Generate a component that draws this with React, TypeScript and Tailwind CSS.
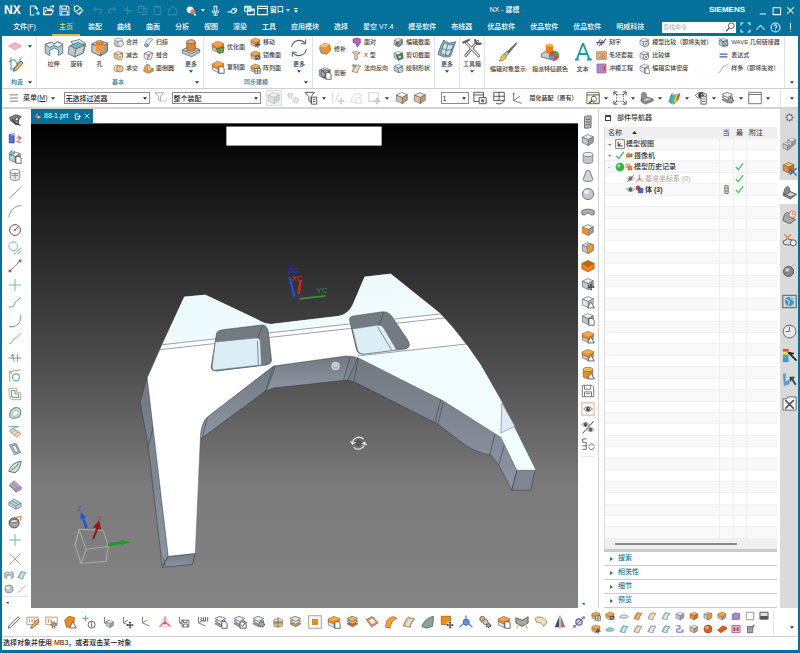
import React from 'react';
import { clsx } from 'clsx';

type Tone = 'grey' | 'orange' | 'blue' | 'pale' | 'tan' | 'teal' | 'purple';

const tones: Record<Tone, [string, string, string]> = {
  grey: ['#eceeef', '#c3c7cb', '#9aa0a6'],
  orange: ['#ffb655', '#f28c1e', '#cf6c0c'],
  blue: ['#d6edf5', '#a3cddd', '#77a8be'],
  pale: ['#f6f6f6', '#e6e6e6', '#d3d3d3'],
  tan: ['#f6dfc2', '#e0bd95', '#c09a70'],
  teal: ['#c9eeee', '#84cdd0', '#4fa3a8'],
  purple: ['#e2d2ee', '#c3a9da', '#9a80bd'],
};

const INK = '#656b72';

const Cube = ({ t = 'grey', top }: { t?: Tone; top?: Tone }) => {
  const c = tones[t];
  return (
    <g stroke={INK} strokeWidth=".8" strokeLinejoin="round">
      <path d="M1.5 4.8 7.5 1.8 14 4.2 8.4 7.5Z" fill={tones[top ?? t][0]} />
      <path d="M1.5 4.8 8.4 7.5V14.4L1.5 11.2Z" fill={c[1]} />
      <path d="M8.4 7.5 14 4.2V10.6L8.4 14.4Z" fill={c[2]} />
    </g>
  );
};

const OrangeTopCube = ({ t = 'grey' }: { t?: Tone }) => (
  <>
    <Cube t={t} />
    <path d="M1.5 4.8 7.5 1.8 14 4.2V7L8.4 10.4 1.5 7.6Z" fill="#f28c1e" stroke={INK} strokeWidth=".7" strokeLinejoin="round" />
    <path d="M1.5 4.8 7.5 1.8 14 4.2 8.4 7.5Z" fill="#ffa640" />
  </>
);

const Cyl = ({ t = 'grey' }: { t?: Tone }) => (
  <g stroke={INK} strokeWidth=".8">
    <path d="M2.5 4V12C2.5 15 13.5 15 13.5 12V4Z" fill={tones[t][1]} />
    <ellipse cx="8" cy="4" rx="5.5" ry="2.4" fill={tones[t][0]} />
  </g>
);

const Sheet = ({ t = 'blue' }: { t?: Tone }) => (
  <g stroke={INK} strokeWidth=".8" strokeLinejoin="round">
    <path d="M1.5 12.5C3 8 4.5 5 7 2.5L14.5 4.5C11.5 7 10 10 9.5 14Z" fill={tones[t][1]} />
    <path d="M4.4 12.2C5.5 8.6 7 6 9 4.2L12 5C10 7 8.6 9.6 8 13Z" fill={tones[t][0]} stroke="none" />
  </g>
);

const Layers = ({ t = 'grey' }: { t?: Tone }) => (
  <g stroke={INK} strokeWidth=".9" strokeLinejoin="round">
    <path d="M1 10 7 7.5 13.5 10 7.5 13.5Z" fill={tones[t][2]} />
    <path d="M1 7 7 4.5 13.5 7 7.5 10.5Z" fill={tones[t][0]} />
    <path d="M1 4 7 1.5 13.5 4 7.5 7.5Z" fill={tones[t][0]} />
  </g>
);

const Page = () => (
  <path d="M9 7.5H12.8L15 9.8V15.2H9Z" fill="#fff" stroke="#444" strokeWidth=".9" />
);

const Gear = ({ x = 11.5, y = 11.5, r = 2.6 }: { x?: number; y?: number; r?: number }) => (
  <g fill="#fff" stroke="#444">
    <circle cx={x} cy={y} r={r + 0.9} strokeDasharray="1.4 1.2" strokeWidth="1.4" />
    <circle cx={x} cy={y} r={r} strokeWidth=".9" />
    <circle cx={x} cy={y} r={r / 3} strokeWidth=".7" />
  </g>
);

const Move = () => (
  <path d="M11.5 8V15M8 11.5H15M10.5 9 11.5 8 12.5 9M10.5 14 11.5 15 12.5 14M9 10.5 8 11.5 9 12.5M14 10.5 15 11.5 14 12.5" fill="none" stroke="#333" strokeWidth="1.1" />
);

const Axes = () => (
  <g fill="none" strokeWidth="1.1">
    <path d="M4 2V9" stroke="#5a9a6a" />
    <path d="M4 9 12 12.5" stroke="#777" />
    <path d="M4 9 9.5 5.5" stroke="#c96a56" />
  </g>
);

const Tri = () => <path d="M11 7.5 15.2 14.8H7.6Z" fill="#fff" stroke="#555" strokeWidth="1" />;

const Pencil = () => (
  <path d="M6 13 13 5 15 7 8.3 14.4 5.4 15.2Z" fill="#f4c84a" stroke="#4a4a4a" strokeWidth=".9" />
);

const Eye = () => (
  <g fill="none" stroke="#444" strokeWidth="1">
    <path d="M1.5 8C4.5 3.5 11.5 3.5 14.5 8C11.5 12.5 4.5 12.5 1.5 8Z" fill="#fff" />
    <circle cx="8" cy="8" r="2.8" fill="#444" />
    <circle cx="8.8" cy="7.2" r=".8" fill="#fff" stroke="none" />
  </g>
);

const line = (d: string, stroke = INK, strokeWidth = 1.1) => (
  <path d={d} fill="none" stroke={stroke} strokeWidth={strokeWidth} strokeLinecap="round" strokeLinejoin="round" />
);

const icons: Record<string, React.ReactNode> = {
  plane: <path d="M.5 8 8 4 15.5 8 8 12.5Z" fill="#f5b4c8" stroke="#df8fa8" strokeWidth=".8" />,
  sketch: <>{line('M3 1.5V13.5M3 13.5C6 13.5 8 11 13 2M1 6C6 2 8 4 9 8', '#5da7bd', 1.2)}<Pencil /></>,
  extrude: <g stroke={INK} strokeWidth=".7" strokeLinejoin="round">
    <path d="M1 5 6 3.4 8 5 10.6 3 15 5V12L11.5 14V9.5L8.2 8 4.6 9.8V14L1 12Z" fill={tones.blue[1]} />
    <path d="M1 5 6 3.4 8 5 10.6 3 15 5 11.5 7.4 8 6 4.6 7.6Z" fill="#e2f3f8" />
  </g>,
  revolve: <g stroke={INK} strokeWidth=".7" strokeLinejoin="round">
    <path d="M1.5 7 9 3 15 5 13 12 6 15 1 12.5Z" fill={tones.grey[1]} />
    <path d="M3 3 10 1.2 14.8 4.4 7.5 7.2Z" fill="#d5eef8" />
    <path d="M2.5 6 9 3.5 14 5.6 7 9Z" fill="#6bb4d2" />
    <path d="M7 9 14 5.6 13 12 6 15Z" fill="#c9ced2" />
  </g>,
  hole: <><Cube /><path d="M4.6 4.6H11V10C11 12 4.6 12 4.6 10Z" fill="#f39a35" /><ellipse cx="7.8" cy="4.4" rx="3.4" ry="1.6" fill="#e97d11" /></>,
  more: <g stroke={INK} strokeWidth=".7">
    <path d="M1 9.5 7.5 6.5 15 9.2V11.5L8.6 15 1 12Z" fill="#c4c9cd" />
    <path d="M1 9.5 8.6 12.5 15 9.2" fill="none" />
    <path d="M4.6 3V9C4.6 10.8 11.4 10.8 11.4 9V3Z" fill="#ee8014" />
    <ellipse cx="8" cy="3" rx="3.4" ry="1.6" fill="#ffb050" />
  </g>,
  cube: <Cube />,
  cubeOrange: <Cube t="orange" />,
  cubeTop: <OrangeTopCube />,
  cubePale: <Cube t="pale" />,
  cubeTan: <Cube t="tan" />,
  cubeHalf: <><Cube /><path d="M7 4C10 3 13 4 14 4.6V10.6L8.4 14.4C7 12 6 7 7 4Z" fill="#f39a35" stroke={INK} strokeWidth=".7" /></>,
  cubeFront: <><Cube /><path d="M1.5 4.8 8.4 7.5V14.4L1.5 11.2Z" fill="#f28c1e" /></>,
  shell: <g stroke="#9a5410" strokeWidth=".8" strokeLinejoin="round"><path d="M1 5 8 1.6 15 5V11L8 14.8 1 11Z" fill="#ee8418" /><path d="M1 5 8 8.5 15 5" fill="none" /><path d="M3.6 5 8 3 12.4 5 8 7.2Z" fill="#c76a0e" /></g>,
  unite: <><Cyl /><path d="M7 7 11 5.6 15 7V12L11 14.5 7 12Z" fill="#e3e6e8" stroke={INK} strokeWidth=".8" /></>,
  subtract: <><Cube t="tan" /><ellipse cx="10" cy="10" rx="4" ry="4.4" fill="#fff1df" stroke="#9a6b35" /><circle cx="10" cy="10" r="1.7" fill="#e28a34" /></>,
  intersect: <g fill="#f7e3c9" stroke="#9a6b35"><circle cx="6" cy="8" r="4.6" /><circle cx="10" cy="8.4" r="4.8" fill="#eab878" fillOpacity=".7" /></g>,
  sweep: <g stroke={INK} strokeWidth=".9"><path d="M3 14C1 10 5 3 11 1.5L14.5 4C10 6 8 10 8 13Z" fill="#d5ecf4" /><circle cx="5.5" cy="12.3" r="2.3" fill="#7bb6d0" /></g>,
  sew: <><path d="M2 5 8 2 14.5 4.5 12 13 6 14 1.5 11Z" fill="#eceeef" stroke={INK} />{line('M2 5 7.6 7.4 14 4.6M7.6 7.4 6.4 13.6', INK)}<circle cx="9" cy="9" r="1.4" fill="#d86a55" /></>,
  blend: <g stroke={INK} strokeWidth=".8"><path d="M1 12C1 7 3 4 6 2L10 4V9L15 8V12L8 15Z" fill="#f29a38" /><path d="M10 4C10 7 11 9 15 8L8 12C6 10 6 6 6 2Z" fill="#ffca85" /></g>,
  optimise: <><OrangeTopCube t="tan" /><path d="M6 10 15 8 14 14 9 15.5Z" fill="#6c9a4a" stroke="#3c5d26" strokeWidth=".8" /></>,
  copyFace: <><OrangeTopCube t="pale" /><Page /></>,
  moveFace: <><OrangeTopCube t="tan" /><Move /></>,
  mirrorFace: <><OrangeTopCube t="tan" /><path d="M8 8H15V14H8Z" fill="#4d4d4d" /><path d="M9 12 11 9.5 13.5 13" stroke="#fff" fill="none" /></>,
  patternFace: <><OrangeTopCube t="tan" /><path d="M7 8H15V15H7ZM11 8V15M7 11.5H15" fill="#fff" stroke="#444" strokeWidth="1" /></>,
  cycle: <>{line('M2.2 7A6 6 0 0 1 13 4.4M13.8 9A6 6 0 0 1 3 11.6', '#666', 0.9)}{line('M13.3 1.4V4.6H10M2.7 14.6V11.4H6', '#666', 0.9)}</>,
  patch: <><path d="M2 5 7 1.5 13 3 14.6 9 10 14 3.5 12.5Z" fill="#f0932c" stroke="#8d7350" /><path d="M2 5 8 6 13 3 7 1.5Z" fill="#ffc47a" /><path d="M1 7 4 6.5 5.5 10.5 3 12Z" fill="#959ba1" /></>,
  trimBody: <><Cube /><circle cx="8" cy="9" r="4.6" fill="#a4a9ad" stroke="#444" />{line('M4 4 13 14M13 6 6 13', '#333', 1)}<Page /></>,
  facePair: <path d="M3 3 8 1.5 13.5 3V9L9 14.5 7 9 3 8Z" fill="#b860c8" stroke="#6b3b8b" />,
  xform: <><path d="M2 3 8 2 13.5 4 9 7 9.5 13 5.5 14V7Z" fill="#f2d3bb" stroke="#8b7464" /><path d="M5 4 8 7 12 4" fill="none" stroke="#cb694f" /></>,
  flip: <><Sheet t="tan" />{line('M3 3 7 6M3 3V6M3 3H6', '#5c8350', 1.2)}</>,
  editSection: <><Cube /><path d="M3 11 13 3V9L7 14Z" fill="#8ba48c" stroke={INK} /><circle cx="6" cy="9" r="2" fill="#5d6268" /></>,
  cutSection: <><Cube /><path d="M5 8 13 5 15 12 8 15Z" fill="#3f9a4e" stroke="#28602f" /><circle cx="10" cy="10" r="1.6" fill="#c8f0c0" /></>,
  drawShape: <><Cube t="blue" /><circle cx="11" cy="10" r="3.6" fill="#e5e8ea" stroke={INK} /><path d="M10 8 13 12" stroke="#4c9b58" /></>,
  surface: <g stroke={INK} strokeWidth=".7" strokeLinejoin="round"><path d="M.8 13C2 8 4 4 5.5 1.5 8.5 5 11 4 15 3 13.4 6.5 12 11 10.8 14.6 7.5 16 4 15 .8 13Z" fill="#79b4c9" /><path d="M3 12C4 8 5 5.4 6.3 3.6 9 6 11 5.6 13.4 5 12.2 8 11 11 10 13.5 7.5 14.3 5 13.6 3 12Z" fill="#c9e9f2" /><path d="M4 8.4C7 10 9 10 12 9M8.4 5.2 6.6 14" fill="none" /></g>,
  tools: <>{line('M3.5 4 13.4 14.4M12.6 2.6 3 14', '#5b5b5b', 2.2)}{line('M3.5 4 13.4 14.4M12.6 2.6 3 14', '#fff', 0.9)}{line('M1 3.6 5.6 1.5M10.4 1.6C10.6 4.4 12.6 5.4 15 4.4', '#5b5b5b', 1.6)}</>,
  brush: <g stroke="#555" strokeWidth=".5"><path d="M15.2 1 8 9.8 6.5 8.4 14.6.6Z" fill="#8b6a4a" /><path d="M8.6 9 6.8 11 5 9.6 6.6 7.8Z" fill="#cfd3d6" /><path d="M6.8 11C6 14 3.5 15.6 1 15.2 2.5 13.5 2.4 10.8 5 9.6Z" fill="#f4c53a" /></g>,
  colour: <><path d="M1 9.5 7 6.5 14 9 8.6 14 1 12Z" fill="#c9cdd0" stroke={INK} strokeWidth=".7" /><path d="M4.6 2.4V8C4.6 9.6 10.4 9.6 10.4 8V2.4Z" fill="#ee8014" /><ellipse cx="7.5" cy="2.4" rx="2.9" ry="1.2" fill="#ffb050" /><circle cx="11.2" cy="11" r="3.8" fill="#49a7d8" stroke="#555" strokeWidth=".5" /><path d="M11.2 11V7.2A3.8 3.8 0 0 0 7.4 11Z" fill="#e2483a" /><path d="M11.2 11V7.2A3.8 3.8 0 0 1 15 11Z" fill="#41a94b" /><path d="M11.2 11H15A3.8 3.8 0 0 1 11.2 14.8Z" fill="#e2483a" /></>,
  letterA: <path d="M8 1 13.2 14M8 1 3 14M5 9.6H11.2M1.6 14H4.6M11.2 14H15" fill="none" stroke="#1b9aa6" strokeWidth="1.5" />,
  engrave: <>{line('M2 11 6 4M5 13 9 5M8 11 14 3', '#8a56a8', 1.8)}{line('M1 8H12', '#4b4453', 1.3)}</>,
  nest: <g stroke="#a05b32"><path d="M1 2.5H15V13.5H1Z" fill="#f3c295" /><path d="M4 5H7V11H4ZM9 5H12V8H9ZM9 9.5H12V12H9Z" fill="#fff3e4" /></g>,
  die: <g strokeWidth="1"><path d="M1.5 1.5H14.5V14.5H1.5Z" fill="#d9a1bd" stroke="#73598f" /><path d="M4 2V14M7 2V14M10 2V14" stroke="#754db0" /><path d="M11 4H14V12H11Z" fill="#d84d48" /></g>,
  compare: <><Cube t="pale" /><circle cx="10" cy="10" r="3.8" fill="#fff" stroke="#444" /><circle cx="10.2" cy="10.2" r="1.5" fill="#777" /></>,
  density: <><Cube t="pale" /><Page /></>,
  wave: <><Cube t="blue" /><circle cx="10.5" cy="9.5" r="4" fill="#b8bec3" stroke="#444" />{line('M2 2 14 13', '#444', 0.9)}</>,
  equals: line('M3 6H13M3 10H13', '#3d5f92', 1.8),
  spline: line('M1 14C6 13 5 5 9 4.4S12 3 15 1.5', '#6aa9b8', 1.2),
  menu: line('M2 3H14M2 8H14M2 13H14', '#555', 1.2),
  filter: <>{line('M1.5 2H11L7.6 6.5V12L5.2 10V6.5Z', '#aaa')}{line('M9 11C12 14 14 12 14.5 9', '#c4c4c4')}</>,
  filterOn: <><path d="M1 1.5H12L8 6.5V13L5.5 11V6.5Z" fill="#fff" stroke="#444" /><path d="M8.5 7H14.5V15H8.5ZM10 9.5H13M10 12H13" fill="#fff" stroke="#444" /></>,
  ghostPick: <g opacity=".4"><Cube /></g>,
  ghostGears: <g opacity=".3"><Gear x={5} y={5} r={2} /><Gear x={11} y={10.5} r={2.2} /></g>,
  ghostMove: <g opacity=".3">{line('M2 14V3M5 12 9 3', INK)}<Move /></g>,
  ghostSheet: <g opacity=".3"><Sheet t="pale" /><circle cx="11" cy="11" r="3.3" fill="#fff" stroke={INK} /></g>,
  ghostBox: <g opacity=".35"><path d="M2 2H13V12H2Z" fill="none" stroke={INK} /><Move /></g>,
  cubeTopPale: <Cube t="tan" top="pale" />,
  windowGear: <><path d="M1 1.5H12V12H1ZM1 4.5H12" fill="#fff" stroke="#444" /><path d="M7 7.5H15V14.5H7Z" fill="#fff" stroke="#444" /><circle cx="11" cy="11" r="2" fill="#777" /></>,
  windowSplit: <><path d="M2 1.5H14V11H2ZM8 1.5V11M2 6H14" fill="#fff" stroke="#444" />{line('M5 14C9 16 13 14 14 11', '#444')}</>,
  csysDots: <>{line('M3 3V11L12 14M3 11 10 6', '#666', 1)}<circle cx="3" cy="3" r="1" fill="#666" /></>,
  orient: <><path d="M1 1.5H15V14.5H1Z" fill="#fff6d9" stroke="#666" />{line('M1 4.5H15', '#666')}<path d="M9 4.5H15V14H9Z" fill="#fff" stroke="#666" /><circle cx="9" cy="9" r="3" fill="#fff" stroke="#555" />{line('M7 11 3.5 14', '#555', 1.6)}</>,
  fit: <><path d="M4 4H12V12H4Z" fill="none" stroke="#888" strokeDasharray="2 1" />{line('M1 4.5V1H4.5M11.5 1H15V4.5M15 11.5V15H11.5M4.5 15H1V11.5M2 2 4.5 4.5M14 2 11.5 4.5M14 14 11.5 11.5M2 14 4.5 11.5', '#444', 1.1)}</>,
  shaded: <g stroke="#555" strokeWidth=".6"><path d="M2 2.5C5 0 8 2 7.5 7L15 9V11.5L6 15 1 12Z" fill="#8d9296" /><path d="M7.5 7 15 9 6 12.3 1 10C3 10 6 9.6 7.5 7Z" fill="#c5c9cc" /></g>,
  rainbow: <g><path d="M2 12 5 3 8 5 6 15Z" fill="#3aa5dd" /><path d="M5 13 8 4 11 5 8.5 15Z" fill="#54c26a" /><path d="M8 12 10.5 4 12.5 4.5 10 13Z" fill="#f1d33c" /><path d="M10 12 12 4 15 3 13 10Z" fill="#e7602d" /><path d="M2 12C4 6 5 4 6 2.5 9 5 12 3 15 3L12 12C9 13 8 15 6 15Z" fill="none" stroke="#666" strokeWidth=".6" /></g>,
  eyePage: <><g transform="translate(0 -3)"><Eye /></g><path d="M8 6H14V15H8ZM9.5 9H12.5M9.5 12H12.5" fill="#fff" stroke="#555" /></>,
  layerGear: <><Layers /><Gear x={11} y={10.6} r={2.2} /></>,
  blank: <path d="M.8 1.5H15.2V14.5H.8ZM.8 4H15.2" fill="#fff" stroke="#666" />,
  // left strip
  machine: <><path d="M2 5 9 2 15 4 12 8V13L6 11 3 9Z" fill="#85898d" stroke="#444" /><circle cx="10" cy="7" r="2" fill="#e5e7e8" stroke="#333" />{line('M5 7 9 13M8 12 14 14', '#333', 1.2)}</>,
  pattern: <><path d="M1.5 4H7V13.5H1.5Z" fill="#5a72d4" stroke="#3b3f97" /><path d="M3 2H8V5H3Z" fill="#a9b4f0" />{line('M10 8H15M12 5.5 14.8 8 12 10.5M10 12 14 13', '#d2606a', 1.3)}</>,
  wrench: <><Cube />{line('M2 3 5 1M3 6 8 3', '#4fa3b6', 1.4)}<Page /></>,
  cylPlus: <><Cyl t="pale" />{line('M8 5.5V12M4.6 8.5H11.4', '#8a8f95')}</>,
  ln: line('M1.5 14 14.5 2', '#70a9a4'),
  arc: line('M1 15C2 8 6 3 15 1.5', '#6aa0b0'),
  circle: <><circle cx="8" cy="8" r="6.2" fill="none" stroke="#8b3f4b" strokeWidth="1.1" />{line('M8 8 12 4', '#8b3f4b')}<circle cx="8" cy="8" r="1.2" fill="#d04848" /></>,
  circleLine: <><circle cx="6" cy="6" r="5" fill="none" stroke="#67b5c8" strokeWidth="1.1" />{line('M7 15 15 8', '#6aa493')}{line('M11 15 15 11.5', '#67b5c8')}</>,
  points: <>{line('M2 14 14 2', '#7b8c96')}<circle cx="2.2" cy="13.8" r="1.7" fill="#cc4b35" /><circle cx="13.8" cy="2.2" r="1.7" fill="#cc4b35" /></>,
  plus: line('M8 1.5V14.5M1.5 8H14.5', '#69b1c2'),
  curveA: line('M1.5 12.5C6 14 8 8 9 6.5S12 4.5 14.5 2', '#4f97ad'),
  curveB: line('M2 14.5C10 15 15 11 14.5 1.5M2 14.5H7', '#6da58d'),
  curveC: line('M1.5 13.5C6 12.5 5 8 8 7S12 4 14.5 2', '#ba9062'),
  trim: line('M1 8H15M5 4 7 12M11 4V12M4 6 5 4 7 5', '#5c9e9b'),
  offset: <>{line('M2 14V3L14 1M2 3 5 6', '#b19b6c')}<circle cx="9" cy="9.6" r="4" fill="none" stroke="#5ab0b5" strokeWidth="1.3" /></>,
  offsetL: <>{line('M1.5 1.5H10V6H14.5V14.5H6C3 14.5 1.5 12 1.5 9Z', '#bfa57e')}{line('M4 4H8V8H12V12H7C5 12 4 10.5 4 9Z', '#5ca79e', 1.3)}</>,
  bean: <><path d="M2 12C1 6 6 1 11 2S15.5 12 10 13.5 3 14 2 12Z" fill="#cfe6e4" stroke="#668f92" strokeWidth="1.2" /><path d="M5 11C4.5 7 7 4.5 10 5S12 10 9.5 11 5.5 12 5 11Z" fill="#fff" stroke="#b19b6c" /></>,
  sheetPull: <><path d="M1.5 8 6 5 15 11 10 15Z" fill="#f3d9c0" stroke="#a88a70" strokeWidth=".9" />{line('M4 10 9 7M7 12.5 12 9', '#a88a70', 0.8)}{line('M1 3H12M3 6 12 3', '#6aa8c0')}</>,
  sheet: <Sheet />,
  sheetSteep: <g stroke={INK} strokeWidth=".8" strokeLinejoin="round"><path d="M1.5 3.5 9 1.5 14.5 12 7.5 14.5Z" fill="#a3cddd" /><path d="M4.5 4.5 8.4 3.4 12 11 8.6 12.2Z" fill="#e4f3f8" /></g>,
  sheetDark: <g stroke="#4f5960" strokeWidth="1" strokeLinejoin="round"><path d="M1 13C3 6 7 3 15 1.5 14.5 7 12 12 8 14.5Z" fill="#cfe4e4" /><path d="M4 11C7 10.5 10 7 12 4" fill="none" /></g>,
  sheetPurple: <g stroke={INK} strokeWidth=".8" strokeLinejoin="round"><path d="M1.5 7 7 2 15 9.5V12L9 15Z" fill="#c3a9da" /><path d="M1.5 7 9 12 15 9.5M9 12V15M4.2 4.6 12 10.6" fill="none" /></g>,
  sheetWide: <g stroke={INK} strokeWidth=".8" strokeLinejoin="round"><path d="M1 6 7 2.5 15 7V11L9 14 1 9.5Z" fill="#bcdbe6" /><path d="M1 6 9 10.4 15 7M9 10.4V14M4 4.4 12 8.6" fill="none" /></g>,
  sheetOrange: <Sheet t="orange" />,
  sheetTan: <Sheet t="tan" />,
  sheetTeal: <Sheet t="teal" />,
  sheetGrey: <Sheet t="grey" />,
  ballPull: <><circle cx="7" cy="9" r="5.8" fill="#a3a7aa" stroke="#444" /><path d="M1.6 8C4 5 9 4.6 12 6.4 9 9 5 9.6 1.6 8Z" fill="#f0f1f1" stroke="#444" strokeWidth=".8" />{line('M9 3 15 1.5 14 6', '#e08b3c', 1.3)}</>,
  cross: line('M2 2 14 14M14 2 2 14', '#9a9a78', 1),
  // right strip
  block: <><path d="M4 2 6.5 1H11.5V14L9 15H4Z" fill="#b7babd" stroke="#666" />{line('M6 5H10M6 8H10M6 11H10', '#666')}</>,
  cyl: <Cyl />,
  cone: <path d="M6 2.2C7 1.4 9 1.4 10 2.2L13.6 12C13 15 3 15 2.4 12Z" fill="#d2d5d8" stroke={INK} />,
  sphere: <><circle cx="8" cy="8" r="6.4" fill="#c3c7ca" stroke={INK} /><ellipse cx="6.4" cy="5.8" rx="3" ry="2.4" fill="#eef0f1" /></>,
  tube: <path d="M1 7C3 4 13 4 15 7V10.5C13 12 11 11.5 10.5 10 9 9 7 9 5.5 10 5 11.5 3 12 1 10.5Z" fill="#a9aeb2" stroke="#666" />,
  cubeMove: <><Cube /><Move /></>,
  cubeTri: <><Cube t="pale" /><Tri /></>,
  cubePage: <><Cube top="pale" /><Page /></>,
  orangeTri: <><OrangeTopCube t="tan" /><Tri /></>,
  cylTri: <><Cyl t="orange" /><Tri /></>,
  save: <><path d="M1.5 1.5H12.5L14.5 3.5V14.5H1.5Z" fill="#fff" stroke="#666" strokeWidth="1" />{line('M4 2V6H11V2M4 14V9H12V14M6 11H10', '#777')}</>,
  eyeBox: <><path d="M1 1H15V15H1Z" fill="none" stroke="#e7b98c" strokeWidth="1.3" /><g transform="translate(2 2) scale(.76)"><Eye /></g></>,
  eyes: <><g transform="scale(.65)"><Eye /></g><g transform="translate(6 6) scale(.62)"><Eye /></g>{line('M2 15 14 2', '#444')}</>,
  loops: <>{line('M6 1H2V5H6V9H2M2 13H6V9', '#666')}{line('M9 9C11 5 15 7 15 9M15 11C13 15 9 13 9 11', '#666')}</>,
  // bottom bar
  pencilBar: <path d="M2 12.5 12.5 2 14.5 4 4 14.5 1.5 15Z" fill="#ecebe7" stroke="#555" />,
  noteEdit: <><path d="M1 2.5H14V11H1Z" fill="#fff" stroke="#b2916b" />{line('M4 5V8M7 5V8M10 5V8', '#dc9c4c', 1.5)}<Pencil /></>,
  noteGear: <><path d="M1 2.5H14V11H1Z" fill="#fff" stroke="#b2916b" />{line('M4 5V8M7 5V8', '#dc9c4c', 1.5)}<Gear x={10} y={11} r={2} /></>,
  orangeDoc: <><path d="M2 6 7 1.5 13 3 12 13 4 14Z" fill="#ef8a1d" stroke="#a8621a" /><Tri /></>,
  pointInfo: <>{line('M4 1V7M1 4H7', '#5aa4bb')}<circle cx="11" cy="11" r="4" fill="#fff" stroke="#555" />{line('M11 10V13M11 8.6V9', '#555')}</>,
  axesCube: <><Axes /><g transform="translate(5 5) scale(.66)"><Cube /></g></>,
  axesMove: <><Axes /><Move /></>,
  axes: <Axes />,
  csys: <>{line('M8 8V2M8 8 2 13M8 8 14 13', '#c4616b', 1.2)}{line('M8 2 2 13H14Z', '#e5a3a9', 0.8)}<circle cx="8" cy="9" r="1.8" fill="#c4616b" /></>,
  axesSave: <><Axes /><g transform="translate(6 5) scale(.6)"><path d="M1.5 1.5H14.5V14.5H1.5ZM4 2V6H11V2M4 14V9H12V14" fill="#fff" stroke="#444" strokeWidth="1.4" /></g></>,
  axesText: <><Axes />{line('M7 3V7M9.5 3V7H12V3M14.5 3V7', '#555')}</>,
  layerPage: <><Layers /><Page /></>,
  layerCheck: <><Layers /><path d="M8 8H15V15H8Z" fill="#fff" stroke="#444" />{line('M9.5 11.5 11 13 14 9', '#444')}</>,
  layerTan: <Layers t="tan" />,
  cylTan: <><g transform="translate(1 3) scale(.9 .75)"><Cyl t="tan" /></g>{line('M8 3V14M3 9H13', '#8b6e50')}</>,
  square: <><path d="M.8.8H15.2V15.2H.8Z" fill="#fff" stroke="#9aa7b0" strokeWidth="1.2" /><path d="M4.5 4.5H11.5V11.5H4.5Z" fill="#e98a1f" /></>,
  layerOrange: <Layers t="orange" />,
  plate: <g transform="rotate(15 8 8)"><path d="M1 7 7 2 15 7 9 13.5Z" fill="#d99a63" stroke="#8d7868" /><path d="M4 7 7.4 4 12 7 8.6 10.6Z" fill="#f6ece4" /></g>,
  pipe: <path d="M2 14C2 6 6 2 11 2L15 4C10 5 8 9 7 15Z" fill="#f2a13c" stroke="#a4702c" />,
  greyWing: <path d="M1 13C3 7 8 3 14 1.5V7L13 13 6 15Z" fill="#8aa39b" stroke="#5b6a66" />,
  orangeMove: <><path d="M1.5 1.5H12V11H1.5Z" fill="#ec8c1f" stroke="#b1640d" /><circle cx="11.5" cy="11.5" r="4" fill="#eee" /><Move /></>,
  blueCsys: <><path d="M5 6 8 4.5 11.5 6V10L8 12 5 10Z" fill="#5f92d8" stroke="#3762a6" />{line('M8 5V1M5 10 1 13.5M11 10 15 13.5', '#4477c0', 1.3)}</>,
  beads: <><circle cx="5" cy="4.5" r="3" fill="#c6ad95" stroke="#75655a" /><circle cx="8.5" cy="8" r="3" fill="#dcc8b2" stroke="#75655a" /><Gear x={12} y={12} r={1.6} /></>,
  saddle: <><path d="M1 3 8 6 15 2V9L8 13 1 9Z" fill="#a5a7a0" stroke="#5a5a55" />{line('M4 11 2 15M12 11 14 15', '#d29a58')}</>,
  fan: <path d="M1 4C6 0 12 3 15 8L11 13C9 9 6 8 3 8.6Z" fill="#e8e1b8" stroke="#8c8762" />,
  mirror: <><path d="M6.8 2V14H2Z" fill="#3b4770" /><path d="M9.2 2V14H14Z" fill="#c26060" />{line('M8 1V15', '#444', 0.8)}</>,
  link: <><circle cx="8" cy="8" r="3.6" fill="#cdd3f0" stroke="#5a639a" strokeWidth="1.3" /><circle cx="2.6" cy="13" r="1.8" fill="#8e97c4" /><circle cx="13.4" cy="3" r="1.8" fill="#8e97c4" />{line('M3 13 13 3', '#5a639a')}</>,
  lens: <path d="M1 10C4 5 11 5 15 9L11 11.5H4Z" fill="#d8dcdc" stroke="#6c7f80" />,
  lensTeal: <path d="M1 10C4 5 11 5 15 9L11 11.5H4Z" fill="#8fd2d6" stroke="#4e9ba0" />,
  folder: <path d="M2 5 7 3 14 4V13L2 14Z" fill="#a984cf" stroke="#70519b" />,
  frame: <path d="M2 2H14V14H2Z" fill="#fff" stroke="#777" strokeWidth="1.2" />,
  tray: <><path d="M1.5 2H14.5V13H1.5Z" fill="#ddd" stroke="#444" strokeWidth="1.4" /><path d="M2 8H14V13H2Z" fill="#555" /></>,
  ballOrange: <><circle cx="8" cy="8" r="6.3" fill="#df621f" stroke="#84401a" /><ellipse cx="6" cy="5.5" rx="2.6" ry="2" fill="#ffb68a" /></>,
  redBar: <path d="M1 10 9 3 15 5V8L6 14Z" fill="#dd5a23" stroke="#8c3b18" />,
  nav: <>{line('M3 3H8V8H3V13H12', '#6b5fc4', 1.6)}<circle cx="12" cy="11" r="2.6" fill="#a9a0e8" /></>,
  tag: <><path d="M1.5 2.5H14.5V13.5H1.5Z" fill="#f2c6d8" stroke="#a23f64" strokeWidth="1.2" /><path d="M4 5H7V11H4ZM9 5H12V11H9Z" fill="#a23f64" /></>,
  vase: <path d="M4 4H11L15 1.5 13 5 12 14H4Z" fill="#9ca0a3" stroke="#444" />,
  // resource bar
  gear: <><path d="M8 .8V15.2M.8 8H15.2M3 3 13 13M13 3 3 13" stroke="#555" strokeWidth="2" /><circle cx="8" cy="8" r="5" fill="#dadada" stroke="#555" strokeWidth="1.4" /><circle cx="8" cy="8" r="2" fill="#eee" /></>,
  assembly: <><g transform="translate(0 4) scale(.7)"><Cube /></g><g transform="translate(5 0) scale(.68)"><Cube /></g></>,
  constraint: <><g transform="scale(.9)"><Cube t="orange" top="orange" /></g>{line('M9 9 15 15M9 14 15 8', '#4b6b9c', 1.6)}</>,
  part: <g stroke="#444" strokeWidth=".7"><path d="M3 4C6 0 9 2 8.4 7L15.4 10 9 15 1 11Z" fill="#858b91" /><path d="M8.4 7 15.4 10 9 12.6 2 9.6C4 10 8 9.6 8.4 7Z" fill="#cfd4d8" /></g>,
  partClock: <><g transform="translate(0 2) scale(.92)"><path d="M3 4C6 0 9 2 8.4 7L15.4 10 9 15 1 11Z" fill="#a5aaae" stroke="#555" /></g><circle cx="11" cy="5.5" r="3.6" fill="#ffe8da" stroke="#e3774a" />{line('M11 3.6V5.5H12.6', '#e3774a')}</>,
  reuse: <><path d="M1 9 6 6 12 8 8 13 2 12Z" fill="#ddd" stroke="#555" />{line('M3 2 6 5 9 2', '#e8893c', 1.6)}<circle cx="12" cy="10.5" r="3.2" fill="#fff" stroke="#444" /></>,
  ball: <><circle cx="7" cy="9" r="5.4" fill="#85898c" stroke="#555" /><ellipse cx="5.6" cy="7.2" rx="2.4" ry="2" fill="#c9cccd" />{line('M11 3 14 1', '#bbb')}</>,
  globe: <><path d="M.8 1.5H15.2V14.5H.8Z" fill="#cfd5d8" stroke="#70767a" strokeWidth="1.3" /><circle cx="8" cy="8" r="4.8" fill="#4196b4" />{line('M5 6 8 8 7 11M9 4 12 7', '#b8e2ec', 1.2)}</>,
  clock: <><circle cx="8" cy="8" r="6.8" fill="#e9e9e9" stroke="#777" strokeWidth="1.1" />{line('M8 3.5V8H4.5', '#666', 1)}</>,
  spectrum: <><path d="M1 1H7V4H1Z" fill="#e8442e" /><path d="M1 4H7V7H1Z" fill="#f3e13a" /><path d="M1 7H7V10H1Z" fill="#48b84e" /><path d="M1 10H7V15H1Z" fill="#3a94e0" />{line('M7 5 15 13M7 5 12 6', '#222', 1.8)}</>,
  pick: <><path d="M1 2 4 1V10L8 8V13L2 15Z" fill="#5d9bd0" /><path d="M8 5 14 5 12 7.4 15.4 13 13.6 14 10.4 8.6 8.6 11Z" fill="#34414d" /></>,
  toolbox: <><path d="M1 3H5L6 1H15V15H1Z" fill="#f5f5f5" stroke="#666" />{line('M4 5 12 13M12 5 4 13', '#555', 1.7)}</>,
};

const Icon = ({ name, className = 'size-[14px]' }: { name: string; className?: string }) => (
  <svg viewBox="0 0 16 16" className={clsx('shrink-0', className)} aria-hidden="true">{icons[name]}</svg>
);

const Caret = ({ className = 'text-[#333]' }: { className?: string }) => (
  <svg viewBox="0 0 6 4" className={clsx('h-[3px] w-1 shrink-0', className)} aria-hidden="true">
    <path d="M0 0H6L3 4Z" fill="currentColor" />
  </svg>
);

const IconButton = ({ name, className }: { name: string; className?: string }) => (
  <button type="button" aria-label={name} className="flex shrink-0 items-center justify-center">
    <Icon name={name} className={className} />
  </button>
);

const BigButton = ({ icon, label, caret, className }: { icon: string; label: string; caret?: boolean; className: string }) => (
  <button type="button" className={clsx('flex shrink-0 flex-col items-center pt-[2px]', className)}>
    <Icon name={icon} className="size-5" />
    <span className="mt-[2px] leading-2">{label}</span>
    {caret && <Caret className="mt-[2px]" />}
  </button>
);

const WideButton = ({ icon, label, className }: { icon: string; label: string; className: string }) => (
  <button type="button" className={clsx('flex shrink-0 flex-col items-center pt-[6px]', className)}>
    <Icon name={icon} className="size-5" />
    <span className="mt-[3px] leading-2">{label}</span>
  </button>
);

const SmallColumn = ({ items }: { items: [string, string][] }) => (
  <div className="flex shrink-0 flex-col">
    {items.map(([icon, label]) => (
      <button key={label} type="button" className="flex h-[13px] items-center gap-[2px]">
        <Icon name={icon} className="size-[11px]" />
        <span>{label}</span>
      </button>
    ))}
  </div>
);

const MediumColumn = ({ items, className }: { items: [string, string][]; className: string }) => (
  <div className="flex shrink-0 flex-col pt-px">
    {items.map(([icon, label]) => (
      <button key={label} type="button" className={clsx('flex items-center gap-[2px]', className)}>
        <Icon name={icon} />
        <span>{label}</span>
      </button>
    ))}
  </div>
);

const Group = ({ label, className, children }: { label?: string; className?: string; children: React.ReactNode }) => (
  <section className="flex shrink-0 flex-col border-r border-[#e2e2e2]">
    <div className={clsx('flex flex-1', className)}>{children}</div>
    {label && (
      <div className="flex h-[11px] items-center px-1 text-[#2b7896]">
        <span className="flex-1 text-center">{label}</span>
        <Caret />
      </div>
    )}
  </section>
);

const TitleIcon = ({ d, faint }: { d: string; faint?: boolean }) => (
  <button type="button" aria-label="quick access" className={clsx('size-[11px] shrink-0', faint && 'opacity-20')}>
    <svg viewBox="0 0 16 16" className="size-full">
      <path d={d} fill="none" stroke="#e9f5fa" strokeWidth="1.5" />
    </svg>
  </button>
);

const TitleBar = () => (
  <header className="grid h-[18px] grid-cols-[1fr_auto_35%] items-center pt-[2px] text-white">
    <div className="flex items-center pl-[2px]">
      <span className="mr-2 text-[12px] leading-4 font-bold">NX</span>
      <div className="flex items-center gap-[3px]">
        <TitleIcon d="M2 1.5H9L12 5V8M2 1.5V14.5H8M10 12H16M13 9V15M9 2V5H12" />
        <TitleIcon d="M1 14V4H5L7 6H13V8M1 14 4 8H15L12 14ZM10 3 15 1V4" />
      </div>
      <div className="ml-[5px] flex items-center gap-[3px]">
        <TitleIcon d="M1.5 1.5H12.5L14.5 3.5V14.5H1.5ZM4 2V6H11V2M4 14V9H12V14" />
        <TitleIcon d="M2 2 7 1 14 8 9 14 2 8ZM5 9 12 4M9 12 15 7" />
      </div>
      <div className="ml-2 flex items-center gap-1">
        <TitleIcon faint d="M3 6H10C15 6 15 12 10 12M6 3 3 6 6 9" />
        <TitleIcon faint d="M13 6H6C1 6 1 12 6 12M10 3 13 6 10 9" />
        <TitleIcon faint d="M8 2V14M2 8H14M4 4 12 12" />
        <TitleIcon faint d="M2 2H10V11H2ZM6 5H14V14H6" />
        <TitleIcon faint d="M3 2H12V14H3ZM6 1V4H10" />
        <TitleIcon faint d="M2 7 8 2 14 7V14H2Z" />
      </div>
      <button type="button" aria-label="material" className="ml-2 flex items-center gap-1">
        <svg viewBox="0 0 16 16" className="size-[11px]">
          <circle cx="6" cy="7" r="5" fill="#f2ebe7" />
          <circle cx="10" cy="10" r="3.6" fill="#d37f68" />
          <circle cx="13" cy="14" r="1.6" fill="#f4f4f4" />
        </svg>
        <Caret className="text-white" />
      </button>
      <div className="ml-[5px] flex items-center gap-[6px]">
        <TitleIcon d="M6 2H10V9H6ZM3 8C3 13 13 13 13 8M8 12V15M5 15H11" />
        <TitleIcon d="M1 10H6M6 10C8 3 15 4 14 8S7 13 6 10M9 6 13 9" />
        <TitleIcon d="M1 2H10V9H1ZM5 6H15V14H5ZM1 4H10M5 8H15" />
      </div>
      <button type="button" className="ml-[2px] flex items-center gap-[2px] text-[7px]">
        <svg viewBox="0 0 16 16" className="size-[11px]"><path d="M1 2H15V14H1ZM1 5H15" fill="none" stroke="#fff" strokeWidth="1.5" /></svg>
        <span>窗口</span>
        <Caret className="text-white" />
      </button>
      <button type="button" aria-label="customise" className="ml-1 flex flex-col items-center gap-px">
        <span className="h-px w-1 bg-white" />
        <Caret className="text-white" />
      </button>
    </div>
    <h1 className="text-[7px]">NX - 建模</h1>
    <div className="flex items-center justify-end">
      <span className="mr-3 text-[8px] font-bold">SIEMENS</span>
      <div className="flex items-center gap-[3px] pr-[2px]">
        <TitleIcon d="M4 13H13" />
        <TitleIcon d="M3 4H14V14H3Z" />
        <TitleIcon d="M3 3 13 13M13 3 3 13" />
      </div>
    </div>
  </header>
);

const tabs = ['主页', '装配', '曲线', '曲面', '分析', '视图', '渲染', '工具', '应用模块', '选择', '星空 V7.4', '模圣软件', '布线器', '优品软件', '优品软件', '优品软件', '明威科技'];

const TabBar = () => (
  <div className="flex h-[18px] items-center text-[7px] text-white">
    <nav className="flex h-full shrink-0 items-center gap-px">
      <button type="button" className="mr-1 h-full pr-[11px] pl-[11px]">文件(F)</button>
      {tabs.map((tab, i) => (
        <button
          key={i}
          type="button"
          className={clsx('h-full border-b-2 px-[7px] pt-[2px]', i === 0 ? 'border-[#d9b93f] text-[#f3d65a]' : 'border-transparent')}
        >
          {tab}
        </button>
      ))}
    </nav>
    <div className="ml-auto flex items-center gap-1 pr-[2px]">
      <label className="flex h-[11px] w-[74px] items-center bg-white px-px">
        <input type="text" placeholder="查找命令" aria-label="查找命令" className="w-full min-w-0 text-[6px] text-gray-700 outline-none placeholder:text-[#b5b5b5]" />
        <svg viewBox="0 0 16 16" className="size-[10px] shrink-0"><circle cx="10" cy="6" r="4.6" fill="none" stroke="#444" strokeWidth="1.4" /><path d="M7 9.5 1.5 15" stroke="#444" strokeWidth="1.8" /></svg>
      </label>
      <TitleIcon d="M1.5 5V1.5H5M11 1.5H14.5V5M14.5 11V14.5H11M5 14.5H1.5V11" />
      <TitleIcon d="M2 11 8 5 14 11" />
      <TitleIcon d="M8 1.5A6.5 6.5 0 1 0 8 14.5A6.5 6.5 0 1 0 8 1.5M6 6C6 3.6 10 3.6 10 6S8 7.6 8 9.5M8 11V12.5" />
      <TitleIcon d="M8 1V11M8 13V15" />
    </div>
  </div>
);

const Ribbon = () => (
  <div className="flex h-[53px] border-b border-[#cfcfcf] bg-white text-[6px] text-[#3c3c3c]">
    <Group label="构造" className="flex-col pl-[6px]">
      <button type="button" aria-label="datum plane" className="flex h-5 w-[28px] items-center gap-[6px]">
        <Icon name="plane" />
        <Caret />
      </button>
      <IconButton name="sketch" className="mr-3 size-4" />
    </Group>
    <Group label="基本" className="pl-[5px]">
      <BigButton icon="extrude" label="拉伸" className="w-[23px]" />
      <BigButton icon="revolve" label="旋转" className="w-[23px]" />
      <BigButton icon="hole" label="孔" className="w-[23px]" />
      <div className="flex gap-[5px] pl-[2px]">
        <SmallColumn items={[['unite', '合并'], ['subtract', '减去'], ['intersect', '求交']]} />
        <SmallColumn items={[['sweep', '扫掠'], ['sew', '缝合'], ['blend', '面倒圆']]} />
      </div>
      <BigButton icon="more" label="更多" caret className="ml-[5px] w-6" />
    </Group>
    <Group label="同步建模" className="gap-[5px] pl-[7px]">
      <MediumColumn items={[['optimise', '优化面'], ['copyFace', '复制面']]} className="h-5" />
      <SmallColumn items={[['moveFace', '移动'], ['mirrorFace', '镜像面'], ['patternFace', '阵列面']]} />
      <BigButton icon="cycle" label="更多" caret className="w-[26px]" />
    </Group>
    <Group className="gap-[5px] pl-[5px] pr-1">
      <MediumColumn items={[['patch', '修补'], ['trimBody', '剪断']]} className="h-6" />
      <SmallColumn items={[['facePair', '面对'], ['xform', 'X 型'], ['flip', '法向反向']]} />
      <SmallColumn items={[['editSection', '编辑截面'], ['cutSection', '剪切截面'], ['drawShape', '绘制形状']]} />
    </Group>
    <Group><BigButton icon="surface" label="更多" caret className="w-6" /></Group>
    <Group><BigButton icon="tools" label="工具箱" caret className="w-6" /></Group>
    <div className="flex flex-1 border-r border-[#e2e2e2] pl-px">
      <WideButton icon="brush" label="编辑对象显示" className="w-[44px]" />
      <WideButton icon="colour" label="指派特征颜色" className="w-10" />
      <WideButton icon="letterA" label="文本" className="w-[25px]" />
      <div className="flex gap-[6px] pl-px">
        <SmallColumn items={[['engrave', '刻字'], ['nest', '毛坯套裁'], ['die', '冲模工程']]} />
        <SmallColumn items={[['compare', '模型比较（即将失效）'], ['compare', '比较体'], ['density', '编辑实体密度']]} />
        <SmallColumn items={[['wave', 'WAVE 几何链接器'], ['equals', '表达式'], ['spline', '样条（即将失效）']]} />
      </div>
    </div>
    <button type="button" aria-label="ribbon options" className="flex w-[13px] shrink-0 items-end justify-center pb-1"><Caret /></button>
  </div>
);

const Dropdown = ({ value, label, className }: { value: string; label: string; className: string }) => (
  <div className={clsx('relative flex h-3 shrink-0 items-center', className)}>
    <select aria-label={label} className="h-full w-full appearance-none border border-[#8c8c8c] bg-white pl-px text-[7px] leading-none text-[#222]">
      <option>{value}</option>
    </select>
    <Caret className="pointer-events-none absolute right-[3px]" />
  </div>
);

const viewTools = ['orient', 'fit', 'shaded', 'rainbow', 'eyePage', 'layerGear', 'blank'];

const SelectionBar = () => (
  <div className="flex h-[20px] items-center border-b-2 border-[#d4d4d4] bg-white pl-[7px] text-[7px] text-[#222]">
    <button type="button" className="flex items-center gap-[3px]">
      <Icon name="menu" className="mr-px size-[10px]" />
      <span>菜单(<u>M</u>)</span>
      <Caret />
    </button>
    <Dropdown value="无选择过滤器" label="选择过滤器" className="ml-[9px] w-[86px]" />
    <div className="mx-1"><IconButton name="filter" /></div>
    <Dropdown value="整个装配" label="选择范围" className="w-[89px]" />
    <div className="ml-[5px] flex items-center gap-1">
      <span className="flex border border-[#ddd] bg-[#f3f3f3]"><IconButton name="ghostPick" /></span>
      <IconButton name="ghostGears" />
      <IconButton name="filterOn" />
      <Caret />
    </div>
    <div className="ml-[5px] flex items-center gap-1">
      <IconButton name="ghostMove" />
      <IconButton name="ghostSheet" />
      <IconButton name="ghostBox" />
      <Caret />
    </div>
    <div className="mr-[14px] ml-[6px] flex items-center gap-1">
      <IconButton name="cubeTopPale" />
      <IconButton name="cubeTan" />
    </div>
    <Dropdown value="1" label="工作图层" className="w-[28px]" />
    <div className="ml-1 flex items-center gap-[5px]">
      <IconButton name="windowGear" />
      <IconButton name="windowSplit" />
      <IconButton name="csysDots" className="size-[14px]" />
    </div>
    <span className="ml-[5px] shrink-0 text-[6px]">简化装配（原有）</span>
    <div className="ml-2 flex items-center gap-[5px]">
      {viewTools.map((name) => (
        <button key={name} type="button" aria-label={name} className="flex items-center gap-1">
          <Icon name={name} />
          <Caret />
        </button>
      ))}
    </div>
    <div className="ml-auto flex h-full w-[18px] items-center justify-end border-l border-[#e2e2e2] pr-1"><Caret /></div>
  </div>
);

const leftTools = ['machine', 'pattern', 'wrench', 'cylPlus', 'ln', 'arc', 'circle', 'circleLine', 'points', 'plus', 'curveA', 'curveB', 'curveC', 'trim', 'offset', 'offsetL', 'bean', 'sheetPull', 'sheetSteep', 'sheetDark', 'sheetPurple', 'sheetWide', 'ballPull', 'plus', 'cross'];

const LeftToolbar = () => (
  <aside className="flex w-[29px] shrink-0 flex-col items-center bg-white pt-1 pr-[3px]">
    <div className="flex flex-1 flex-col justify-between">
      {leftTools.map((name, i) => <IconButton key={i} name={name} />)}
    </div>
    <div className="mt-1 grid grid-cols-2 gap-x-[3px] gap-y-1">
      {['extrude', 'sheetTeal', 'sphere', 'curveC'].map((name) => <IconButton key={name} name={name} className="size-[10px]" />)}
    </div>
    <div className="mt-[2px] flex h-3 w-full items-center border-t border-[#e4e4e4] pl-1 text-[5px] text-[#333]">◂</div>
  </aside>
);

const rightTools = ['block', 'cube', 'cyl', 'cone', 'sphere', 'tube', 'cubeFront', 'cubeHalf', 'shell', 'cubeMove', 'cubeTri', 'cubePage', 'orangeTri', 'orangeTri', 'cylTri', 'save', 'eyeBox', 'eyes', 'loops'];

const RightToolbar = () => (
  <aside className="flex w-[20px] shrink-0 flex-col items-center bg-white pt-[6px] pr-px">
    <div className="flex flex-[9] flex-col justify-between">
      {rightTools.map((name, i) => <IconButton key={i} name={name} />)}
    </div>
    <div className="mt-1 flex w-3 flex-[4] items-end border-t border-[#e4e4e4] pb-px text-[5px] text-[#333]">◂</div>
  </aside>
);

const Model = () => (
  <svg viewBox="31 124 546 484" preserveAspectRatio="xMidYMid slice" className="absolute inset-0 size-full">
    <defs>
      <linearGradient id="face" x1="0" y1="0" x2="1" y2="1">
        <stop offset="0" stopColor="#e9f8fb" />
        <stop offset="1" stopColor="#f4fdff" />
      </linearGradient>
      <linearGradient id="wall" x1="0" y1="0" x2="0" y2="1">
        <stop offset="0" stopColor="#717882" />
        <stop offset="1" stopColor="#8d97a3" />
      </linearGradient>
    </defs>
    <rect x="226" y="127" width="155" height="19" fill="#fff" />

    {/* side walls */}
    <g fill="url(#wall)" stroke="#3a4048" strokeWidth=".6" strokeLinejoin="round">
      <path d="M147 377 140 402 148 446 162 566 168 556Z" />
      <path d="M168 556 195 553 192 564 162 567Z" />
      <path d="M273 366 207 417Q200 424 200 439L265 391 273 387Z" />
      <path d="M273 366 345 356 358 356 354 382 347 380 273 388 265 391Z" />
      <path d="M358 356 441 400 500 436 516 470 511 490 498 465 490 455Q480 454 466 446L437 424 354 382 347 380Z" />
      <path d="M516 470 534 470 530 490 511 490Z" fill="#7d8691" />
      <path d="M275 366 266 390M350 356 343 380M358 357 353 382M440 400 434 422M443 401 437 424M494 434 489 455M504 443 498 465M148 446 153 427M163 557 165 566M207 417 202 438" fill="none" />
    </g>

    {/* top face */}
    <path
      d="M184 297 205 295 258 320Q264 324 271 324L338 316Q348 314 352 305L364 277 390 274 439 313Q452 326 466 345L480 365 501 402 535 470 516 470 500 437 441 400 360 359Q355 356 345 356L273 366 207 417Q200 424 200 439L195 553 168 556 147 378 162 344Z"
      fill="#fff" stroke="#5a646b" strokeWidth=".5"
    />
    <path d="M184 297 205 295 258 320Q264 324 271 324L338 316Q348 314 352 305L364 277 390 274 440 314 162 345Z" fill="url(#face)" />
    <path d="M358 356 466 345 480 365 501 402 534 469 516 469 500 436 441 399Z" fill="#f0fcff" />
    <path d="M501 403 500 433 514 426Z" fill="#dfe9f4" stroke="#6e7c88" strokeWidth=".6" />
    <path d="M160 345 440 314M157 350 444 318M357 356 466 344" fill="none" stroke="#59636b" strokeWidth=".6" />

    {/* pockets */}
    <g stroke="#3c434a" strokeWidth=".6" strokeLinejoin="round">
      <path d="M216 335Q216 331 221 330L262 325Q267 325 268 333L271 360Q271 364 266 365L216 371Q210 371 211 366Z" fill="#727a82" />
      <path d="M215 342 256 338Q260 338 260 343L261 365 216 370Q211 371 212 365Z" fill="#dceef5" stroke="#6c7a85" />
      <path d="M257 338 262 326M257 341 258 365" fill="none" />
      <path d="M349 320Q349 316 354 316L381 312Q386 311 390 315L407 340Q411 347 405 349L364 354Q358 355 356 350Z" fill="#727a82" />
      <path d="M352 329 378 325Q381 325 383 328L396 350 364 354Q358 354 357 350Z" fill="#dceef5" stroke="#6c7a85" />
      <path d="M378 326 383 313M377 327 391 350" fill="none" />
    </g>
    <g fill="none" stroke="#dfe5ea" strokeWidth="1"><circle cx="335" cy="366" r="3.6" fill="#aab1b8" /><path d="M333 366H337M333 364H337" /></g>

    {/* work coordinate system */}
    <g strokeWidth="2.6" fill="none">
      <path d="M289 277 294 297" stroke="#1e50e8" strokeWidth="2.2" />
      <path d="M300 281 298 294" stroke="#d02323" />
      <path d="M299 299 325 296" stroke="#2d9a37" strokeWidth="1.6" />
    </g>
    <g fontSize="8" fontFamily="Liberation Sans, sans-serif">
      <text x="288" y="273" fill="#1c3dbd">ZC</text>
      <text x="291" y="281" fill="#d53a3a">XC</text>
      <text x="316" y="293" fill="#3e8442">YC</text>
    </g>

    {/* view triad */}
    <path d="M79 529 103 530 108 545 106 561 81 563 75 545ZM79 529 86 549 81 563M86 549 108 546M75 545 79 529" fill="none" stroke="#b0b0b0" strokeWidth=".9" />
    <path d="M85 528 82 518 80 519 81 512 86 517 84 518 88 527Z" fill="#1f55dd" />
    <path d="M92 539 96 528 93 527 99 520 101 529 98 529 94 539Z" fill="#9a1515" />
    <path d="M108 543 121 541V540L130 542 121 545V544L108 546Z" fill="#1d9a26" />
    <text x="77" y="511" fontSize="7" fontFamily="Liberation Sans, sans-serif" fill="#2f55d0">Z</text>
    <text x="98" y="520" fontSize="6" fontFamily="Liberation Sans, sans-serif" fill="#a83a3a">X</text>

    {/* rotate cursor */}
    <g fill="none" stroke="#f1f1f1" strokeWidth="1.2">
      <path d="M352 444A6.4 6.4 0 0 1 363 439M364 442A6.4 6.4 0 0 1 353 447" />
      <path d="M350 441 352 444 355 442M366 445 364 442 361 444" strokeWidth="1" />
      <circle cx="358" cy="443" r="2" stroke="#333" strokeWidth=".9" />
    </g>
  </svg>
);

const Canvas = () => (
  <main className="flex min-w-0 flex-1 flex-col bg-white">
    <div className="flex h-[14px] items-stretch">
      <div className="flex w-[62px] items-center bg-[#03719a] px-[3px] text-[7px] text-white">
        <Icon name="part" className="mr-[2px] size-2" />
        <span>88-1.prt</span>
        <svg viewBox="0 0 16 16" className="ml-auto size-[7px]"><path d="M10 2H3V14H12V10M7 8H14M11 4 15 8 11 12" fill="none" stroke="#fff" strokeWidth="2" /></svg>
        <button type="button" aria-label="close part" className="ml-[3px] size-[6px]">
          <svg viewBox="0 0 16 16"><path d="M2 2 14 14M14 2 2 14" stroke="#fff" strokeWidth="2" /></svg>
        </button>
      </div>
    </div>
    <div className="relative flex-1 border-t border-[#03719a] bg-linear-[180deg,#000_0%,#1d1d1d_18%,#454545_45%,#7b7b7b_75%,#838383_100%]">
      <Model />
    </div>
  </main>
);

const Check = ({ className = 'size-[10px]' }: { className?: string }) => (
  <svg viewBox="0 0 16 16" className={className}><path d="M1.5 9 6 13.5 14.5 2.5" fill="none" stroke="#3fbf57" strokeWidth="2.2" /></svg>
);

const nodes: { label: string; mark: string; icon: React.ReactNode; indent?: boolean; style?: string; cur?: boolean; latest?: boolean }[] = [
  { label: '模型视图', mark: '+', icon: <svg viewBox="0 0 16 16" className="size-[10px]"><path d="M1 1H15V15H1Z" fill="#fff" stroke="#666" strokeWidth="1.3" /><path d="M5 4V11H12M5 11 9 7" fill="none" stroke="#555" strokeWidth="1.8" /></svg> },
  { label: '摄像机', mark: '+', icon: <><Check /><svg viewBox="0 0 16 16" className="size-2"><path d="M2 6 9 2V13L2 14Z" fill="#d98b45" /><path d="M8 7 15 4V12L8 13Z" fill="#86807a" /></svg></> },
  { label: '模型历史记录', mark: '-', latest: true, icon: <><svg viewBox="0 0 16 16" className="size-[10px]"><circle cx="8" cy="8" r="7" fill="#3ab24f" /><circle cx="6" cy="6" r="2.4" fill="#a8e6ae" /></svg><svg viewBox="0 0 16 16" className="size-2"><path d="M2 2H9V9H2Z" fill="#f2c9a0" stroke="#b96a2f" /><path d="M6 7H14V14H6Z" fill="#e28a3f" stroke="#a3541b" /></svg></> },
  { label: '基准坐标系 (0)', mark: '', indent: true, latest: true, style: 'text-[#ababab]', icon: <><svg viewBox="0 0 16 16" className="size-[9px]"><g opacity=".8"><Eye /></g><path d="M2 14 14 2" stroke="#444" strokeWidth="1.2" /></svg><Icon name="csys" className="size-[9px]" /></> },
  { label: '体 (3)', mark: '', indent: true, cur: true, latest: true, style: 'font-bold', icon: <><svg viewBox="0 0 16 16" className="size-[9px]"><Eye /></svg><svg viewBox="0 0 16 16" className="size-[9px]"><circle cx="5.5" cy="5.5" r="4.5" fill="#c04858" /><path d="M6 6H14V14H6Z" fill="#4d62c8" stroke="#2d3c90" /></svg></> },
];

const ROWS = 35;

const Navigator = () => (
  <section className="flex w-[182px] shrink-0 flex-col border-l border-[#d0d0d0] bg-white pr-[3px] pl-[5px] text-[7px] text-[#333]">
    <h2 className="flex h-[18px] items-center gap-[6px]">
      <span className="ml-px size-[6px] border border-t-2 border-[#444]" />
      部件导航器
    </h2>
    <div className="grid flex-1 border-l border-[#dcdcdc]">
      <table className="size-full table-fixed border-collapse leading-none">
        <colgroup>
          <col />
          <col className="w-[14px]" />
          <col className="w-[13px]" />
          <col className="w-[31px]" />
        </colgroup>
        <thead>
          <tr className="h-[11px] bg-[#efefef] text-left">
            <th className="p-0 pl-[3px] font-normal">
              <span className="flex items-center gap-[10px]">名称 <svg viewBox="0 0 6 4" className="h-[3px] w-[5px]"><path d="M0 4H6L3 0Z" fill="#222" /></svg></span>
            </th>
            <th className="p-0 text-center font-normal">当</th>
            <th className="p-0 text-center font-normal">最</th>
            <th className="p-0 pl-[3px] font-normal">附注</th>
          </tr>
        </thead>
        <tbody>
          {Array.from({ length: ROWS }, (_, i) => {
            const node = nodes[i];
            return (
              <tr key={i} className={clsx('h-[11px] border-y border-[#f1f1f1]', i % 2 === 0 ? 'bg-[#f9f9f9]' : 'bg-white')}>
                <td className="border-r border-[#eeeeee] p-0">
                  {node && (
                    <div className={clsx('flex h-[10px] items-center whitespace-nowrap', node.indent ? 'pl-[21px]' : 'pl-[3px]', node.style)}>
                      {!node.indent && <span className="mr-px w-[6px] text-[6px] text-[#444]">{node.mark}</span>}
                      {node.icon}
                      <span className="ml-px">{node.label}</span>
                    </div>
                  )}
                </td>
                <td className="border-r border-[#eeeeee] p-0">
                  {node?.cur && <svg viewBox="0 0 8 16" className="mx-auto h-[9px] w-[5px]"><path d="M1 1H7V15H1ZM1 5.5H7M1 10.5H7" fill="#efe4dc" stroke="#6b5a52" strokeWidth="1.4" /></svg>}
                </td>
                <td className="border-r border-[#eeeeee] p-0">{node?.latest && <Check className="mx-auto size-[9px]" />}</td>
                <td className="p-0" />
              </tr>
            );
          })}
        </tbody>
      </table>
    </div>
    <div className="flex h-[10px] items-center border-l border-[#dcdcdc] bg-[#f0f0f0] pl-[10px]">
      <span className="h-[2px] w-3/4 bg-[#8a8a8a]" />
    </div>
    <div className="border-t-[3px] border-[#cacaca]">
      {['搜索', '相关性', '细节', '预览'].map((label) => (
        <button key={label} type="button" className="flex h-[14px] w-full items-center gap-[5px] border-b border-[#cccccc] pl-[6px] text-[#2b7a96]">
          <svg viewBox="0 0 4 6" className="h-1 w-[3px]"><path d="M0 0 4 3 0 6Z" fill="#1d5b77" /></svg>
          {label}
        </button>
      ))}
    </div>
  </section>
);

const resources: [string, string][] = [
  ['assembly', 'h-6'],
  ['constraint', 'h-6'],
  ['part', 'h-6 bg-white'],
  ['partClock', 'h-6'],
  ['reuse', 'h-6'],
  ['ball', 'h-[37px]'],
  ['globe', 'h-6'],
  ['clock', 'h-[36px]'],
  ['spectrum', 'h-3'],
  ['pick', 'h-[36px]'],
  ['toolbox', 'h-3'],
];

const ResourceBar = () => (
  <aside className="flex w-[18px] shrink-0 flex-col items-stretch bg-[#dadada]">
    <div className="flex h-[14px] justify-center pt-[2px]"><IconButton name="gear" className="size-[9px]" /></div>
    <div className="flex flex-col pt-[9px]">
      {resources.map(([name, cls]) => (
        <button key={name} type="button" aria-label={name} className={clsx('flex items-center justify-center', cls)}>
          <Icon name={name} className="size-[15px]" />
        </button>
      ))}
    </div>
  </aside>
);

const bottomTools = ['pencilBar', 'noteEdit', 'noteGear', 'orangeDoc', 'pointInfo', 'axesCube', 'axesMove', 'axes', 'csys', 'axesSave', 'axesText', 'layerPage', 'layerCheck', 'layerGear', 'cylTan', 'layerTan', 'square', 'copyFace', 'layerOrange', 'plate', 'pipe', 'sheetTan', 'greyWing', 'orangeMove', 'blueCsys', 'beads', 'copyFace', 'saddle', 'fan', 'mirror', 'link'];

const smallTools = [
  'patternFace', 'mirrorFace', 'lens', 'sheetOrange', 'sheetTan', 'sheet', 'cube', 'cubeOrange', 'cubeHalf', 'cubeTop', 'folder', 'frame', 'tray',
  'moveFace', 'lensTeal', 'sheetTeal', 'sheetTan', 'sheetGrey', 'sheetTeal', 'nav', 'cubeTan', 'ballOrange', 'redBar', 'tag', 'vase',
];

const BottomBar = () => (
  <div className="flex h-[29px] items-center border-b border-[#d2d2d2] bg-white pl-[5px]">
    <div className="flex flex-1 items-center justify-between">
      {bottomTools.map((name, i) => <IconButton key={i} name={name} />)}
    </div>
    <div className="ml-[5px] grid grid-cols-[repeat(13,10px)] gap-x-1 gap-y-[3px] border-r border-[#e2e2e2] pr-1">
      {smallTools.map((name, i) => <IconButton key={i} name={name} className="size-[10px]" />)}
    </div>
    <div className="flex w-6 items-center justify-end self-end pr-1 pb-[7px]"><Caret /></div>
  </div>
);

export default function App() {
  return (
    <div className="flex min-h-screen flex-col bg-[#03719a] px-[2px] pb-[3px] font-['Liberation_Sans','Noto_Sans_CJK_SC',sans-serif] font-medium whitespace-nowrap">
      <TitleBar />
      <TabBar />
      <Ribbon />
      <SelectionBar />
      <div className="flex flex-1 bg-white">
        <LeftToolbar />
        <Canvas />
        <RightToolbar />
        <Navigator />
        <ResourceBar />
      </div>
      <BottomBar />
      <footer className="flex h-[13px] items-center bg-white pl-px text-[7px] font-medium text-[#111]">
        选择对象并使用 MB3，或者双击某一对象
      </footer>
    </div>
  );
}
